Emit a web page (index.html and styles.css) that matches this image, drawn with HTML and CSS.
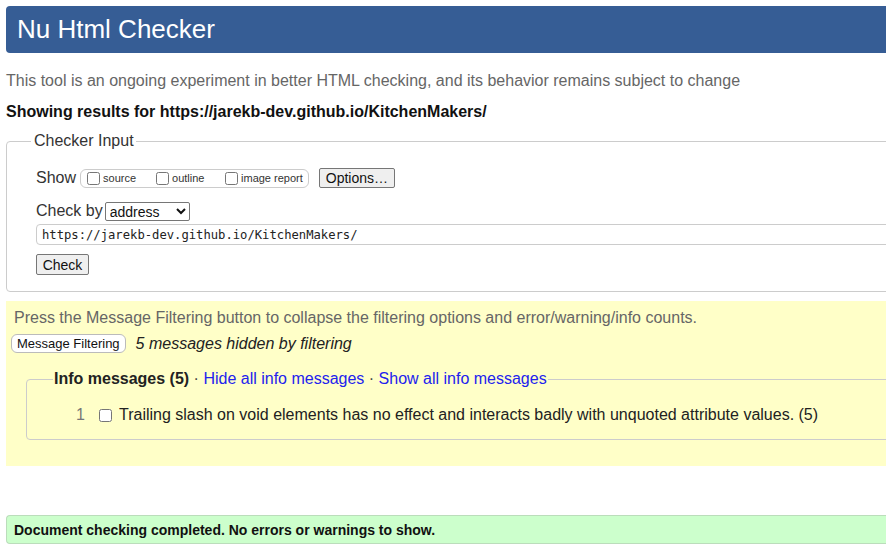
FILE: index.html
```html
<!DOCTYPE html>
<html lang="en">
<head>
<meta charset="utf-8">
<title>Nu Html Checker</title>
<link rel="stylesheet" href="styles.css">
</head>
<body>
<div class="page">
  <h1 class="masthead">Nu Html Checker</h1>
  <p class="intro">This tool is an ongoing experiment in better HTML checking, and its behavior remains subject to change</p>
  <p class="showing">Showing results for https://jarekb-dev.github.io/KitchenMakers/</p>

  <fieldset class="checker">
    <legend class="checker-legend">Checker Input</legend>
    <div class="row show-row">
      <span class="label">Show</span>
      <span class="show-opts">
        <label class="opt"><input type="checkbox">source</label>
        <label class="opt"><input type="checkbox">outline</label>
        <label class="opt"><input type="checkbox">image report</label>
      </span>
      <button class="btn options-btn" type="button">Options…</button>
    </div>
    <div class="row checkby-row">
      <span class="label">Check by</span>
      <select class="select"><option>address</option></select>
    </div>
    <input class="url" type="text" value="https://jarekb-dev.github.io/KitchenMakers/">
    <button class="btn check-btn" type="button">Check</button>
  </fieldset>

  <div class="filtering">
    <p class="filter-note">Press the Message Filtering button to collapse the filtering options and error/warning/info counts.</p>
    <div class="filter-row">
      <button class="filter-btn" type="button">Message Filtering</button>
      <span class="hidden-count">5 messages hidden by filtering</span>
    </div>
    <fieldset class="info">
      <legend class="info-legend"><b>Info messages (5)</b> · <a href="#">Hide all info messages</a> · <a href="#">Show all info messages</a></legend>
      <div class="msg">
        <span class="num">1</span>
        <input type="checkbox" class="msg-check">
        <span class="msg-text">Trailing slash on void elements has no effect and interacts badly with unquoted attribute values. (5)</span>
      </div>
    </fieldset>
  </div>

  <p class="done">Document checking completed. No errors or warnings to show.</p>
</div>
</body>
</html>
```

FILE: styles.css
```css
html { overflow: hidden; }
body {
  margin: 0;
  font-family: "Liberation Sans", Arial, sans-serif;
  font-size: 16px;
  color: #222;
  background: #fff;
}
.page {
  padding: 6px 0 0 6px;
  width: 900px;
}
.masthead {
  margin: 0;
  height: 47px;
  box-sizing: border-box;
  padding: 8px 0 0 11px;
  background: #365d95;
  color: #fff;
  font-weight: normal;
  font-size: 26px;
  line-height: 30px;
  border-radius: 4px 0 0 4px;
}
.intro {
  margin: 19px 0 0;
  line-height: 18px;
  color: #666;
}
.showing {
  margin: 13px 0 0;
  line-height: 18px;
  font-weight: bold;
  color: #111;
}
.checker {
  margin: 11px 0 0;
  padding: 18px 0 16px 29px;
  border: 1px solid #ccc;
  border-radius: 4px 0 0 4px;
  min-inline-size: 0;
}
.checker-legend {
  margin-left: -5px;
  padding: 0 2px 0 3px;
  color: #333;
  line-height: 18px;
}
.row {
  display: flex;
  align-items: center;
}
.label { color: #333; }
.show-row { height: 20px; }
.show-opts {
  display: inline-flex;
  align-items: center;
  margin-left: 4px;
  height: 17px;
  padding: 0 5px 0 5px;
  border: 1px solid #ccc;
  border-radius: 6px;
  font-size: 11px;
  color: #333;
}
.opt {
  display: inline-flex;
  align-items: center;
  width: 69px;
}
.opt:last-child { width: auto; }
.opt input {
  margin: 0 3px 0 1px;
  width: 13px;
  height: 13px;
}
.btn {
  font-family: "Liberation Sans", Arial, sans-serif;
  font-size: 14px;
  background: #efefef;
  border: 1px solid #767676;
  border-radius: 2px;
  color: #111;
  padding: 0 6px;
  height: 20px;
  line-height: 16px;
}
.options-btn { margin-left: 10px; width: 76px; }
.checkby-row { margin-top: 13px; height: 20px; }
.select {
  margin-left: 2px;
  width: 85px;
  height: 19px;
  font-family: "Liberation Sans", Arial, sans-serif;
  font-size: 14px;
  border: 1px solid #767676;
  border-radius: 2px;
  background: #fff;
  color: #111;
  padding: 0;
}
.url {
  display: block;
  margin-top: 3px;
  width: 880px;
  height: 21px;
  box-sizing: border-box;
  border: 1px solid #ccc;
  border-radius: 4px;
  padding: 0 5px;
  font-family: "DejaVu Sans Mono", "Liberation Mono", monospace;
  font-size: 12.2px;
  color: #222;
}
.check-btn {
  display: block;
  margin-top: 9px;
  width: 53px;
  height: 21px;
  padding: 0;
}
.filtering {
  margin-top: 9px;
  background: #ffffc8;
  padding: 8px 0 0 0;
  height: 157px;
}
.filter-note {
  margin: 0 0 0 8px;
  color: #666;
  line-height: 18px;
}
.filter-row {
  display: flex;
  align-items: center;
  margin: 7px 0 0 5px;
}
.filter-btn {
  font-family: "Liberation Sans", Arial, sans-serif;
  font-size: 13px;
  background: #fff;
  border: 1px solid #bbb;
  border-radius: 6px;
  padding: 0 5px;
  height: 19px;
  color: #111;
}
.hidden-count {
  margin-left: 10px;
  font-style: italic;
  color: #222;
}
.info {
  margin: 17px 0 0 20px;
  padding: 18px 0 15px 0;
  border: 1px solid #ccc;
  border-radius: 4px 0 0 4px;
  min-inline-size: 0;
}
.info-legend {
  margin-left: 26px;
  padding: 0 1px 0 1px;
  color: #444;
  line-height: 18px;
}
.info-legend b { color: #222; }
.info-legend a {
  color: #2222ee;
  text-decoration: none;
}
.msg {
  display: flex;
  align-items: center;
  line-height: 18px;
}
.num {
  width: 58px;
  text-align: right;
  color: #777;
}
.msg-check {
  margin: 0 0 0 14px;
  width: 13px;
  height: 13px;
}
.msg-text {
  margin-left: 7px;
  color: #222;
}
.done {
  margin: 49px 0 0;
  height: 29px;
  box-sizing: border-box;
  padding: 6px 0 0 7px;
  background: #ccffcc;
  border: 1px solid #bbddbb;
  border-right: none;
  border-radius: 4px 0 0 4px;
  font-weight: bold;
  font-size: 14px;
  line-height: 16px;
  color: #111;
}
```
